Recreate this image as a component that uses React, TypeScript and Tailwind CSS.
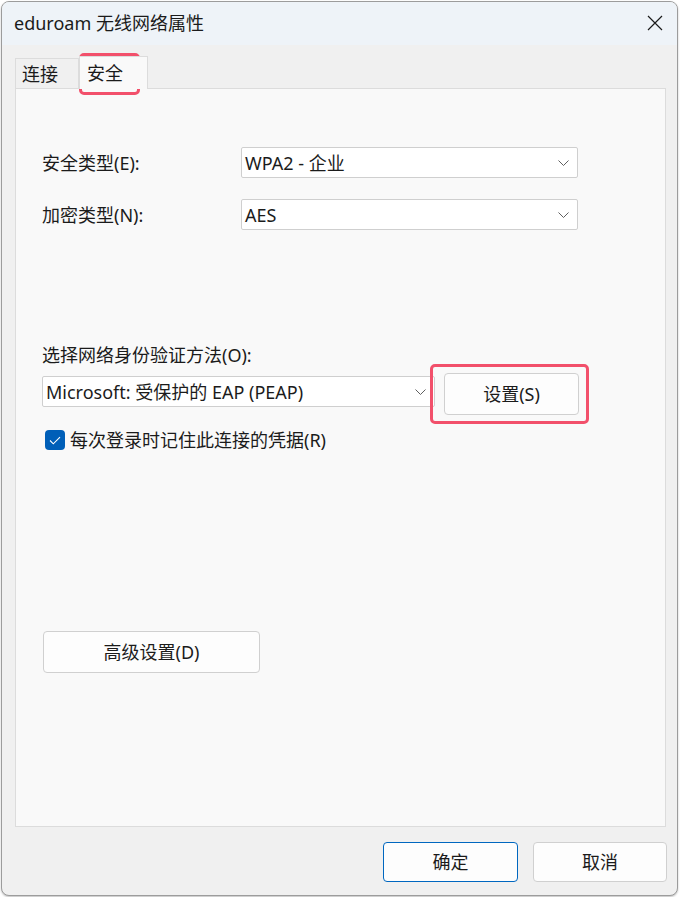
import React from 'react';

const font = { fontFamily: '"Noto Sans", "Noto Sans CJK SC", sans-serif' };

const Chevron = () => (
  <svg width="11" height="6" viewBox="0 0 11 6" className="shrink-0">
    <path d="M0.5 0.5 L5.5 5.5 L10.5 0.5" fill="none" stroke="#5f5f5f" strokeWidth="1" />
  </svg>
);

const Select = ({ value, className }: { value: string; className: string }) => (
  <div
    className={`flex items-center justify-between bg-white border border-[#cfcfcf] rounded-[2px] pl-[3px] pr-[8px] ${className}`}
  >
    <span className="text-[18px] leading-[24px] text-[#1b1b1b] whitespace-nowrap">{value}</span>
    <Chevron />
  </div>
);

const Button = ({ label, className, primary }: { label: string; className: string; primary?: boolean }) => (
  <button
    className={`flex items-center justify-center bg-[#fdfdfd] border rounded-[4px] text-[18px] leading-[24px] text-[#1b1b1b] ${
      primary ? 'border-[#0067c0]' : 'border-[#d0d0d0]'
    } ${className}`}
  >
    {label}
  </button>
);

const App = () => {
  return (
    <div className="relative w-[680px] h-[897px] bg-white pt-px pl-px" style={font}>
      <div className="w-[677px] h-[895px] flex flex-col border border-[#9c9c9c] rounded-[8px] overflow-hidden bg-[#f0f0f0] shadow-[0_1px_2px_rgba(0,0,0,0.25)]">
        {/* title bar */}
        <div className="h-[43px] shrink-0 bg-[#eef3f8] flex items-center justify-between pl-[12px] pr-[14px]">
          <span className="text-[18px] leading-[24px] text-[#1b1b1b] -mt-[2px]">eduroam 无线网络属性</span>
          <svg width="16" height="16" viewBox="0 0 16 16" className="-mt-[2px]">
            <path d="M1 1 L15 15 M15 1 L1 15" stroke="#1b1b1b" strokeWidth="1.2" fill="none" />
          </svg>
        </div>

        {/* tabs */}
        <div className="shrink-0 h-[43px] pt-[11px] pl-[13px] flex items-end">
          <div className="h-[30px] w-[64px] border border-b-0 border-[#dcdcdc] bg-[#f0f0f0] flex items-center pl-[6px]">
            <span className="text-[18px] leading-[24px] text-[#1b1b1b]">连接</span>
          </div>
          <div className="relative z-10 -mb-px h-[33px] w-[69px] border border-b-0 border-[#dcdcdc] bg-[#f9f9f9] flex items-center pl-[7px]">
            <span className="text-[18px] leading-[24px] text-[#1b1b1b]">安全</span>
          </div>
        </div>

        {/* panel */}
        <div className="flex-1 ml-[13px] mr-[11px] border border-[#dcdcdc] bg-[#f9f9f9] flex flex-col pl-[26px] text-[#1b1b1b]">
          <div className="mt-[58px] flex items-center h-[31px]">
            <span className="w-[199px] text-[18px] leading-[24px]">安全类型(E):</span>
            <Select value="WPA2 - 企业" className="w-[337px] h-[31px]" />
          </div>
          <div className="mt-[21px] flex items-center h-[31px]">
            <span className="w-[199px] text-[18px] leading-[24px]">加密类型(N):</span>
            <Select value="AES" className="w-[337px] h-[31px]" />
          </div>

          <span className="mt-[113px] text-[18px] leading-[24px]">选择网络身份验证方法(O):</span>
          <div className="mt-[6px] flex items-start">
            <Select value="Microsoft: 受保护的 EAP (PEAP)" className="mt-[3px] w-[393px] h-[31px]" />
            <Button label="设置(S)" className="ml-[9px] w-[135px] h-[42px]" />
          </div>

          <div className="mt-[15px] flex items-center h-[20px] pl-[3px]">
            <div className="w-[20px] h-[20px] rounded-[4px] bg-[#005fb8] flex items-center justify-center">
              <svg width="12" height="9" viewBox="0 0 12 9">
                <path d="M1 4.5 L4.3 7.8 L11 1.2" fill="none" stroke="#ffffff" strokeWidth="1.1" />
              </svg>
            </div>
            <span className="ml-[5px] text-[18px] leading-[24px]">每次登录时记住此连接的凭据(R)</span>
          </div>

          <Button label="高级设置(D)" className="mt-[181px] ml-px w-[217px] h-[42px]" />
        </div>

        {/* footer buttons */}
        <div className="shrink-0 pt-[15px] pb-[13px] pr-[10px] flex justify-end gap-[15px]">
          <Button label="确定" primary className="w-[135px] h-[40px]" />
          <Button label="取消" className="w-[134px] h-[40px]" />
        </div>
      </div>

      {/* red annotation boxes */}
      <div className="absolute left-[79px] top-[53px] w-[61px] h-[42px] border-[3px] border-[#f2506b] rounded-[5px] pointer-events-none" />
      <div className="absolute left-[430px] top-[364px] w-[159px] h-[60px] border-[3px] border-[#f2506b] rounded-[5px] pointer-events-none" />
    </div>
  );
};

export default App;
